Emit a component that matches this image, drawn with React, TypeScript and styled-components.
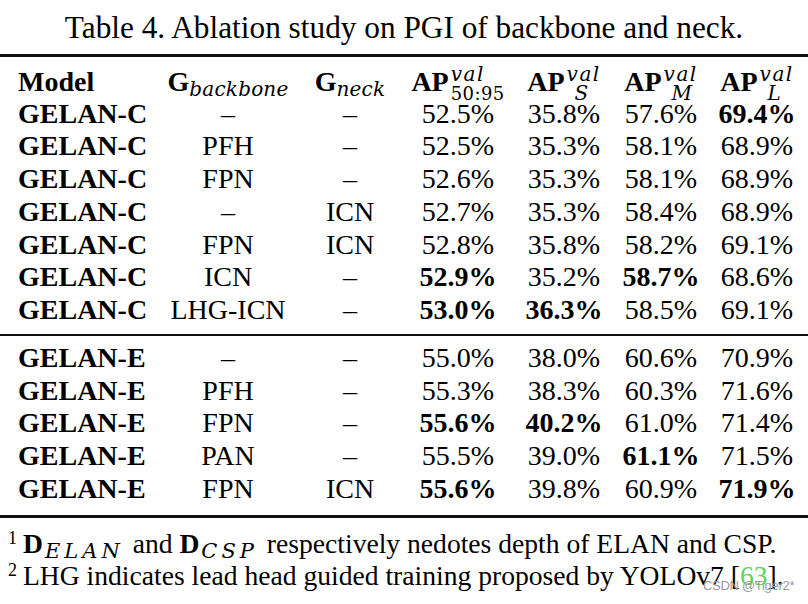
import React from "react";
import styled, { createGlobalStyle } from "styled-components";

const GlobalStyle = createGlobalStyle`
  html, body { margin: 0; padding: 0; background: #fff; }
  body { font-family: "Liberation Serif", "Times New Roman", serif; color: #000; }
`;

const Page = styled.div`
  position: relative;
  width: 808px;
  height: 604px;
  overflow: hidden;
  background: #fff;
`;

const Caption = styled.div`
  height: 54px;
  padding-top: 8px;
  box-sizing: border-box;
  text-align: center;
  font-size: 31.3px;
  line-height: 40px;
`;

const Rule = styled.div<{ $h: number }>`
  height: ${(p) => p.$h}px;
  background: #111;
`;

const COLS = "160px 136px 108px 108px 104px 90px 102px";

const HeaderRow = styled.div`
  display: grid;
  grid-template-columns: ${COLS};
  height: 40.6px;
  align-items: baseline;
  font-size: 28px;
  line-height: 32px;
  padding-top: 8px;
  box-sizing: border-box;
`;

const Body = styled.div<{ $pt: number; $pb: number }>`
  padding-top: ${(p) => p.$pt}px;
  padding-bottom: ${(p) => p.$pb}px;
`;

const Row = styled.div`
  display: grid;
  grid-template-columns: ${COLS};
  height: 32.75px;
  font-size: 28px;
  line-height: 32.75px;
  white-space: nowrap;
`;

const Cell = styled.div<{ $left?: boolean; $bold?: boolean }>`
  text-align: ${(p) => (p.$left ? "left" : "center")};
  padding-left: ${(p) => (p.$left ? "18px" : "0")};
  font-weight: ${(p) => (p.$bold ? 700 : 400)};
`;

const HeadCell = styled.div<{ $left?: boolean }>`
  text-align: ${(p) => (p.$left ? "left" : "center")};
  padding-left: ${(p) => (p.$left ? "18px" : "0")};
  font-weight: 700;
  white-space: nowrap;
`;

const MathSub = styled.span`
  font-family: "DejaVu Serif", serif;
  font-style: italic;
  font-weight: 400;
  font-size: 20px;
  position: relative;
  top: 5px;
  letter-spacing: 0.2px;
`;

const Scripts = styled.span`
  display: inline-flex;
  flex-direction: column;
  vertical-align: 10px;
  margin-left: 2px;
  font-weight: 400;
  line-height: 19px;
  text-align: left;
`;

const Sup = styled.span`
  font-family: "DejaVu Serif", serif;
  font-style: italic;
  font-size: 20px;
  letter-spacing: 1.5px;
`;

const Sub = styled.span<{ $italic?: boolean }>`
  font-family: "DejaVu Serif", serif;
  font-style: ${(p) => (p.$italic ? "italic" : "normal")};
  font-size: ${(p) => (p.$italic ? "20px" : "18px")};
  padding-left: ${(p) => (p.$italic ? "8px" : "0")};
  letter-spacing: 0.4px;
`;

const Notes = styled.div`
  padding-top: 11px;
  padding-left: 8px;
  font-size: 27.6px;
  line-height: 30px;
  white-space: nowrap;
`;

const NoteMark = styled.sup`
  font-size: 18px;
  vertical-align: 9px;
  line-height: 0;
  margin-right: 6px;
`;

const BoldD = styled.b`
  font-weight: 700;
`;

const NoteSub = styled.span`
  font-family: "DejaVu Serif", serif;
  font-style: italic;
  font-size: 21px;
  letter-spacing: 4px;
  position: relative;
  top: 5px;
  margin-left: 2px;
  margin-right: 2px;
`;

const Cite = styled.span`
  color: #5fd35f;
`;

const Watermark = styled.div`
  position: absolute;
  left: 703px;
  top: 578px;
  font-family: "Liberation Sans", Arial, sans-serif;
  font-size: 13px;
  color: #9a9a9a;
  letter-spacing: -0.3px;
`;

type R = { model: string; bb: string; neck: string; v: [string, boolean][] };

const groupC: R[] = [
  { model: "GELAN-C", bb: "–", neck: "–", v: [["52.5%", false], ["35.8%", false], ["57.6%", false], ["69.4%", true]] },
  { model: "GELAN-C", bb: "PFH", neck: "–", v: [["52.5%", false], ["35.3%", false], ["58.1%", false], ["68.9%", false]] },
  { model: "GELAN-C", bb: "FPN", neck: "–", v: [["52.6%", false], ["35.3%", false], ["58.1%", false], ["68.9%", false]] },
  { model: "GELAN-C", bb: "–", neck: "ICN", v: [["52.7%", false], ["35.3%", false], ["58.4%", false], ["68.9%", false]] },
  { model: "GELAN-C", bb: "FPN", neck: "ICN", v: [["52.8%", false], ["35.8%", false], ["58.2%", false], ["69.1%", false]] },
  { model: "GELAN-C", bb: "ICN", neck: "–", v: [["52.9%", true], ["35.2%", false], ["58.7%", true], ["68.6%", false]] },
  { model: "GELAN-C", bb: "LHG-ICN", neck: "–", v: [["53.0%", true], ["36.3%", true], ["58.5%", false], ["69.1%", false]] },
];

const groupE: R[] = [
  { model: "GELAN-E", bb: "–", neck: "–", v: [["55.0%", false], ["38.0%", false], ["60.6%", false], ["70.9%", false]] },
  { model: "GELAN-E", bb: "PFH", neck: "–", v: [["55.3%", false], ["38.3%", false], ["60.3%", false], ["71.6%", false]] },
  { model: "GELAN-E", bb: "FPN", neck: "–", v: [["55.6%", true], ["40.2%", true], ["61.0%", false], ["71.4%", false]] },
  { model: "GELAN-E", bb: "PAN", neck: "–", v: [["55.5%", false], ["39.0%", false], ["61.1%", true], ["71.5%", false]] },
  { model: "GELAN-E", bb: "FPN", neck: "ICN", v: [["55.6%", true], ["39.8%", false], ["60.9%", false], ["71.9%", true]] },
];

const Rows = ({ rows }: { rows: R[] }) => (
  <>
    {rows.map((r, i) => (
      <Row key={i}>
        <Cell $left $bold>{r.model}</Cell>
        <Cell>{r.bb}</Cell>
        <Cell>{r.neck}</Cell>
        {r.v.map(([t, b], j) => (
          <Cell key={j} $bold={b}>{t}</Cell>
        ))}
      </Row>
    ))}
  </>
);

const APHead = ({ sub, italic }: { sub: string; italic?: boolean }) => (
  <HeadCell>
    AP
    <Scripts>
      <Sup>val</Sup>
      <Sub $italic={italic}>{sub}</Sub>
    </Scripts>
  </HeadCell>
);

export default function App() {
  return (
    <Page>
      <GlobalStyle />
      <Caption>Table 4. Ablation study on PGI of backbone and neck.</Caption>
      <Rule $h={3} />
      <HeaderRow>
        <HeadCell $left>Model</HeadCell>
        <HeadCell>
          G<MathSub>backbone</MathSub>
        </HeadCell>
        <HeadCell>
          G<MathSub>neck</MathSub>
        </HeadCell>
        <APHead sub="50:95" />
        <APHead sub="S" italic />
        <APHead sub="M" italic />
        <APHead sub="L" italic />
      </HeaderRow>
      <Body $pt={0} $pb={7}>
        <Rows rows={groupC} />
      </Body>
      <Rule $h={2} />
      <Body $pt={6} $pb={9}>
        <Rows rows={groupE} />
      </Body>
      <Rule $h={3} />
      <Notes>
        <div>
          <NoteMark>1</NoteMark>
          <BoldD>D</BoldD>
          <NoteSub>ELAN</NoteSub> and <BoldD>D</BoldD>
          <NoteSub>CSP</NoteSub> respectively nedotes depth of ELAN and CSP.
        </div>
        <div>
          <NoteMark>2</NoteMark>LHG indicates lead head guided training proposed by YOLOv7 [<Cite>63</Cite>].
        </div>
      </Notes>
      <Watermark>CSDN @Tiger2*</Watermark>
    </Page>
  );
}
